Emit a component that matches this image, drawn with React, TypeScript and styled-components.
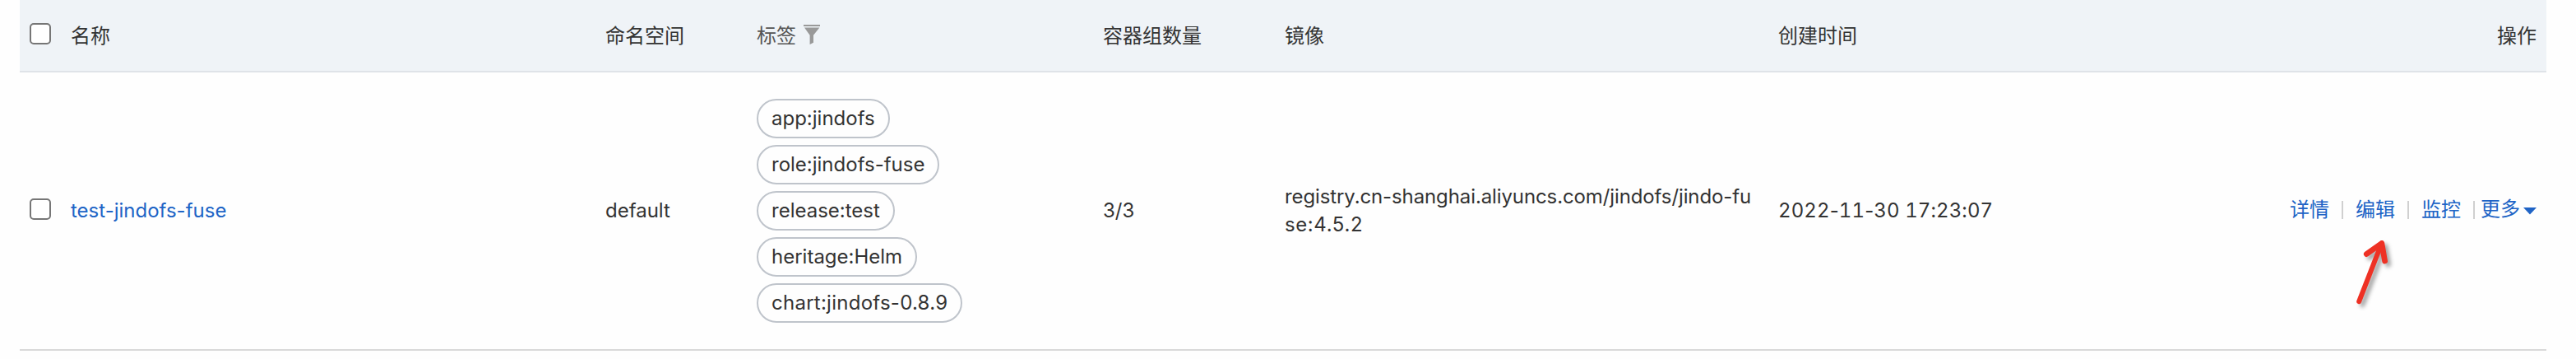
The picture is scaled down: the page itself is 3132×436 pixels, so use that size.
import React from 'react';
import styled, { createGlobalStyle } from 'styled-components';

const GlobalStyle = createGlobalStyle`
  body {
    margin: 0;
    background: #fefefe;
    color: #333;
    font: 24px/34px Inter, "Noto Sans CJK SC", sans-serif;
  }
`;

const Page = styled.main`
  box-sizing: border-box;
  height: 436px;
  padding: 0 36px 0 24px;
  overflow: hidden;
`;

const Row = styled.div`
  display: grid;
  grid-template-columns: 62px 650px 184px 421px 221px 600px 1fr 400px;
  align-items: center;
  box-sizing: border-box;
`;

const HeaderRow = styled(Row)`
  height: 88px;
  background: #eff3f7;
  border-bottom: 2px solid #dfe3e8;
`;

const BodyRow = styled(Row)`
  height: 338px;
  border-bottom: 2px solid #d9d9d9;
`;

const HeadCell = styled.div<{ $end?: boolean }>`
  padding: 2px ${(p) => (p.$end ? 12 : 0)}px 0 0;
  text-align: ${(p) => (p.$end ? 'right' : 'left')};
`;

const Cell = styled.div`
  white-space: nowrap;
`;

const CheckCell = styled.div`
  display: flex;
  padding: 0 0 4px 12px;
`;

const Checkbox = styled.input.attrs({ type: 'checkbox' })`
  appearance: none;
  box-sizing: border-box;
  width: 26px;
  height: 26px;
  margin: 0;
  border: 2px solid #767676;
  border-radius: 5px;
  background: #fff;
`;

const FilterHead = styled(HeadCell)`
  display: flex;
  align-items: center;
  gap: 9px;
  color: #555;
`;

const FunnelIcon = styled.svg`
  width: 20px;
  height: 25px;
  margin-bottom: 3px;
  fill: #999;
`;

const NameLink = styled.a`
  color: #2064c6;
`;

const Labels = styled.div`
  display: flex;
  flex-direction: column;
  align-items: flex-start;
  gap: 8px;
`;

const Chip = styled.span<{ $spacing?: number }>`
  box-sizing: border-box;
  height: 48px;
  padding: 0 16px;
  border: 2px solid #bfc4cb;
  border-radius: 24px;
  line-height: 44px;
  white-space: nowrap;
  letter-spacing: ${(p) => p.$spacing ?? 0}px;
`;

const ImageName = styled.div`
  width: 576px;
  letter-spacing: -0.11px;
  word-break: break-all;
`;

const ImageVersion = styled.span`
  letter-spacing: 0.6px;
`;

const Time = styled(Cell)`
  font-variant-numeric: tabular-nums;
  letter-spacing: 0.1px;
`;

const Hyphen = styled.span`
  font-variant-numeric: normal;
`;

const Actions = styled.div`
  position: relative;
  display: flex;
  justify-content: flex-end;
  align-items: center;
  padding: 0 12px 2px 0;
`;

const Action = styled.a`
  color: #2064c6;
  white-space: nowrap;
`;

const Divider = styled.span<{ $tight?: boolean }>`
  width: 2px;
  height: 22px;
  margin: 0 ${(p) => (p.$tight ? 7 : 15)}px 0 15px;
  background: #d0d0d0;
`;

const More = styled(Action)`
  display: flex;
  align-items: center;
  gap: 4px;
  margin-top: -2px;
`;

const Caret = styled.svg`
  width: 16px;
  height: 9px;
  margin-top: 4px;
  fill: #2064c6;
`;

const Pointer = styled.svg`
  position: absolute;
  right: 176px;
  top: 42px;
  width: 60px;
  height: 100px;
  overflow: visible;
  fill: none;
  stroke: #ee3124;
  stroke-linecap: round;
  stroke-linejoin: round;
  filter: drop-shadow(4px 4px 2.5px rgba(0, 0, 0, 0.36));
`;

const labels = [
  { text: 'app:jindofs' },
  { text: 'role:jindofs-fuse' },
  { text: 'release:test' },
  { text: 'heritage:Helm' },
  { text: 'chart:jindofs-0.8.9', spacing: 0.26 },
];

export default function App() {
  return (
    <Page>
      <GlobalStyle />
      <HeaderRow>
        <CheckCell><Checkbox /></CheckCell>
        <HeadCell>名称</HeadCell>
        <HeadCell>命名空间</HeadCell>
        <FilterHead>
          标签
          <FunnelIcon viewBox="0 0 20 25">
            <path d="M0 0h20v2H0zM1 3.6h18.4L12 12.7v9L7.6 24V12.7z" />
          </FunnelIcon>
        </FilterHead>
        <HeadCell>容器组数量</HeadCell>
        <HeadCell>镜像</HeadCell>
        <HeadCell>创建时间</HeadCell>
        <HeadCell $end>操作</HeadCell>
      </HeaderRow>
      <BodyRow>
        <CheckCell><Checkbox /></CheckCell>
        <Cell><NameLink>test-jindofs-fuse</NameLink></Cell>
        <Cell>default</Cell>
        <Labels>
          {labels.map((l) => (
            <Chip key={l.text} $spacing={l.spacing}>{l.text}</Chip>
          ))}
        </Labels>
        <Cell>3/3</Cell>
        <ImageName>
          registry.cn-shanghai.aliyuncs.com/jindofs/jindo-fu<ImageVersion>se:4.5.2</ImageVersion>
        </ImageName>
        <Time>2022<Hyphen>-</Hyphen>11<Hyphen>-</Hyphen>30 17:23:07</Time>
        <Actions>
          <Action>详情</Action>
          <Divider />
          <Action>编辑</Action>
          <Divider />
          <Action>监控</Action>
          <Divider $tight />
          <More>
            更多
            <Caret viewBox="0 0 16 9"><path d="M0 0h16L8 8.5z" /></Caret>
          </More>
          <Pointer viewBox="0 0 60 100">
            <path strokeWidth="6" d="M8.2 86.2L35.5 16" />
            <path strokeWidth="6.8" d="M17.3 28.6L35.8 15.4L39.6 37" />
          </Pointer>
        </Actions>
      </BodyRow>
    </Page>
  );
}
